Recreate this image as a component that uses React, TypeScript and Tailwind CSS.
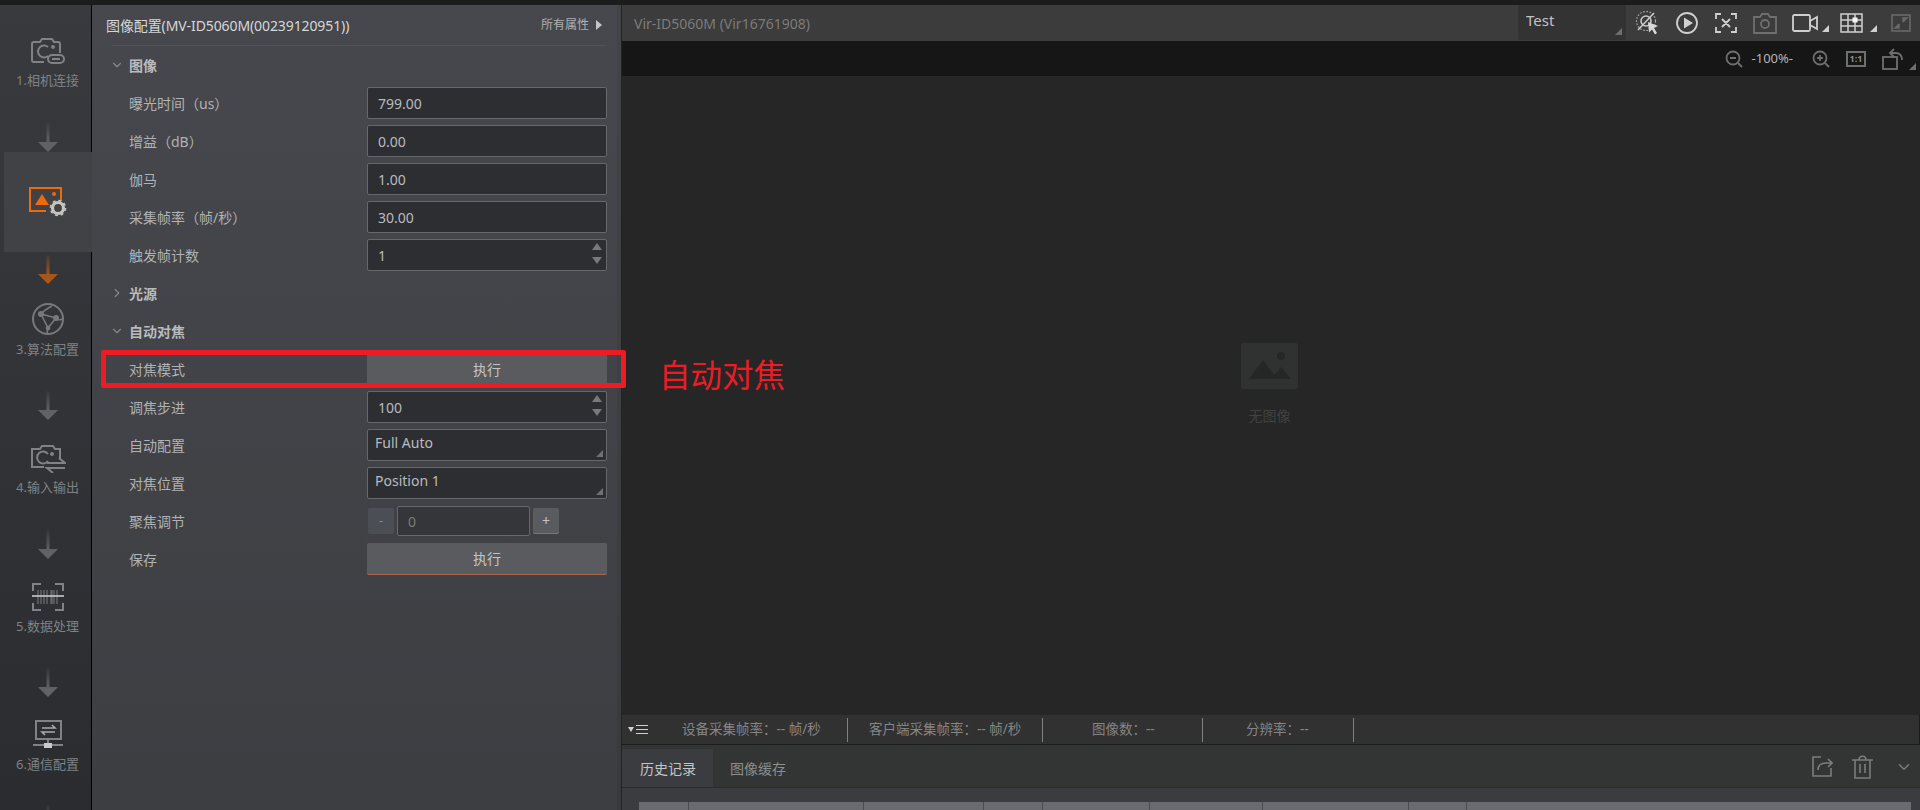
import React from 'react';
import { ChevronDown, ChevronRight } from 'lucide-react';

const FONT = 'font-["Noto_Sans","Noto_Sans_CJK_SC",sans-serif]';

const Arrow = ({ orange = false, id }: { orange?: boolean; id: string }) => {
  const color = orange ? '#a9561a' : '#606265';
  return (
    <svg width="20" height="29" viewBox="0 0 20 29" className="block shrink-0">
      <defs>
        <linearGradient id={id} x1="0" y1="0" x2="0" y2="1">
          <stop offset="0" stopColor={color} stopOpacity="0.1" />
          <stop offset="0.7" stopColor={color} />
        </linearGradient>
      </defs>
      <path d="M8.5 0h3v19H20L10 29 0 19h8.5z" fill={`url(#${id})`} />
    </svg>
  );
};

const StepLabel = ({ text, className }: { text: string; className: string }) => (
  <div className={`h-5 leading-5 text-[13px] whitespace-nowrap text-[#7f8285] ${className}`}>{text}</div>
);

const CameraLinkIcon = () => (
  <svg width="36" height="27" viewBox="0 0 36 27" fill="none" stroke="#808285" strokeWidth="2" className="block">
    <path d="M14 24H4a2 2 0 0 1-2-2V6a2 2 0 0 1 2-2h6l2-3h10l2 3h4a2 2 0 0 1 2 2v9" />
    <path d="M18 9a6 6 0 1 0 0 9" />
    <circle cx="23" cy="9" r="1" fill="#808285" />
    <rect x="18" y="17" width="16" height="8" rx="4" />
    <path d="M22 21h8" />
  </svg>
);

const ImageGearIcon = () => (
  <svg width="38" height="30" viewBox="0 0 38 30" fill="none" className="block">
    <path d="M17 24H1V1h31v13" stroke="#ee6a0b" strokeWidth="2" />
    <path d="M6 18l7-11 7 11z" fill="#ee6a0b" />
    <circle cx="25" cy="7" r="2" fill="#ee6a0b" />
    <circle cx="29" cy="21" r="5.5" stroke="#c9c5c0" strokeWidth="3.2" />
    <circle cx="29" cy="21" r="7.5" stroke="#c9c5c0" strokeWidth="1.6" strokeDasharray="3 2.9" />
  </svg>
);

const AlgoIcon = () => (
  <svg width="32" height="32" viewBox="0 0 32 32" fill="none" stroke="#77797c" strokeWidth="1.6" className="block">
    <circle cx="16" cy="16" r="15" strokeWidth="2" />
    <path d="M9 11l15 4-8 10zM9 11c3-4 7-6 11-8M24 15c2 3 4 2 6 1M16 25l-1 5" />
    <circle cx="9" cy="11" r="2.2" fill="#77797c" />
    <circle cx="24" cy="15" r="2.2" fill="#77797c" />
    <circle cx="16" cy="25" r="1.6" fill="#77797c" />
  </svg>
);

const CameraIoIcon = () => (
  <svg width="36" height="29" viewBox="0 0 36 29" fill="none" stroke="#808285" strokeWidth="2" className="block">
    <path d="M14 23H2V5h8l2-3h11l2 3h5v11" />
    <path d="M18 10a6 6 0 1 0 0 7" />
    <circle cx="22" cy="10" r="1" fill="#808285" />
    <path d="M17 19h18l-6-5M35 24H17l6 5" />
  </svg>
);

const ScanIcon = () => (
  <svg width="32" height="28" viewBox="0 0 32 28" fill="none" className="block">
    <path d="M9 1H1v7M23 1h8v7M9 27H1v-7M23 27h8v-7" stroke="#808285" strokeWidth="2" />
    <path d="M6 7v14M9 7v14M12 7v14M15 7v14M19 7v14M20 7v14M22 7v14M25 7v14" stroke="#65676a" strokeWidth="1.4" />
    <path d="M0 13h32" stroke="#c9cacb" strokeWidth="1.6" />
  </svg>
);

const NetIcon = () => (
  <svg width="30" height="28" viewBox="0 0 30 28" fill="none" className="block">
    <rect x="3" y="1" width="25" height="18" stroke="#808285" strokeWidth="2" />
    <path d="M9 8h13l-3-3M22 12H9l3 3" stroke="#a9abad" strokeWidth="1.6" />
    <path d="M15 19v4M0 25h30" stroke="#808285" strokeWidth="2" />
    <rect x="11" y="23" width="8" height="5" fill="#c9cacb" />
  </svg>
);

const Sidebar = () => (
  <aside className="w-[92px] shrink-0 shadow-[inset_-1px_0_0_#000] bg-gradient-to-b from-[#383a3e] to-[#2a2c2f] flex flex-col items-center overflow-hidden pl-[3px]">
    <div className="mt-[33px] h-[27px]"><CameraLinkIcon /></div>
    <StepLabel text="1.相机连接" className="mt-[5px]" />
    <div className="mt-[33px]"><Arrow id="a1" /></div>
    <div className="w-[88px] h-[100px] self-start ml-[1px] shrink-0 bg-[#404246] flex items-center justify-center">
      <ImageGearIcon />
    </div>
    <div className="mt-[3px]"><Arrow id="a2" orange /></div>
    <div className="mt-[19px]"><AlgoIcon /></div>
    <StepLabel text="3.算法配置" className="mt-[4px]" />
    <div className="mt-[32px]"><Arrow id="a3" /></div>
    <div className="mt-[24px]"><CameraIoIcon /></div>
    <StepLabel text="4.输入输出" className="mt-[4px]" />
    <div className="mt-[33px]"><Arrow id="a4" /></div>
    <div className="mt-[24px]"><ScanIcon /></div>
    <StepLabel text="5.数据处理" className="mt-[5px]" />
    <div className="mt-[32px]"><Arrow id="a5" /></div>
    <div className="mt-[23px]"><NetIcon /></div>
    <StepLabel text="6.通信配置" className="mt-[6px]" />
    <div className="mt-[31px]"><Arrow id="a6" /></div>
  </aside>
);

const Section = ({ title, open = true }: { title: string; open?: boolean }) => (
  <div className="h-[38px] flex items-center pl-[18px] font-bold text-[14px] text-[#b9bbbd]">
    {open ? <ChevronDown size={14} className="text-[#85878a] mr-[5px]" /> : <ChevronRight size={14} className="text-[#85878a] mr-[5px]" />}
    {title}
  </div>
);

const Row = ({ label, children }: { label: string; children: React.ReactNode }) => (
  <div className="h-[38px] flex items-center pl-[37px]">
    <div className="w-[238px] text-[14px] text-[#b0b2b4]">{label}</div>
    <div className="w-[240px] h-[32px]">{children}</div>
  </div>
);

const ValueInput = ({ value, spin = false }: { value: string; spin?: boolean }) => (
  <div className="relative h-full rounded-[2px] border border-[#66686c] bg-[#2d2e32] pl-[10px] flex items-center text-[14px] text-[#b9bbbd]">
    {value}
    {spin && (
      <div className="absolute right-[4px] top-[3px] flex flex-col gap-[7px]">
        <div className="w-0 h-0 border-x-[5px] border-x-transparent border-b-[7px] border-b-[#77797c]" />
        <div className="w-0 h-0 border-x-[5px] border-x-transparent border-t-[7px] border-t-[#77797c]" />
      </div>
    )}
  </div>
);

const SelectBox = ({ value }: { value: string }) => (
  <div className="relative h-full rounded-[2px] border border-[#66686c] bg-[#2d2e32] pl-[7px] pt-[3px] text-[14px] leading-5 text-[#b9bbbd]">
    {value}
    <div className="absolute right-[3px] bottom-[3px] w-0 h-0 border-l-[7px] border-l-transparent border-b-[7px] border-b-[#6e7073]" />
  </div>
);

const RunButton = ({ plain = false }: { plain?: boolean }) => (
  <div className={`h-full rounded-[2px] bg-[#5a5b5f] flex items-center justify-center text-[14px] text-[#c4c5c6] ${plain ? '' : 'border-b border-[#a8674a]'}`}>
    执行
  </div>
);

const ConfigPanel = () => (
  <section className="w-[530px] shrink-0 border-r border-[#232323] bg-gradient-to-b from-[#46484d] to-[#3d3e42] flex">
    <div className="flex-1">
      <div className="h-[41px] pl-[14px] pr-[11px] flex flex-col">
        <div className="h-[40px] flex items-center justify-between text-[14px]">
          <span className="tracking-[-0.1px] text-[#d6d7d8]">图像配置(MV-ID5060M(00239120951))</span>
          <span className="mr-[4px] flex items-center gap-[7px] text-[12px] text-[#aeb0b2]">
            所有属性
            <span className="w-0 h-0 border-y-[5px] border-y-transparent border-l-[6px] border-l-[#c4c5c6]" />
          </span>
        </div>
        <div className="ml-[6px] h-px shrink-0 bg-[#505256]" />
      </div>
      <Section title="图像" />
      <Row label="曝光时间（us）"><ValueInput value="799.00" /></Row>
      <Row label="增益（dB）"><ValueInput value="0.00" /></Row>
      <Row label="伽马"><ValueInput value="1.00" /></Row>
      <Row label="采集帧率（帧/秒）"><ValueInput value="30.00" /></Row>
      <Row label="触发帧计数"><ValueInput value="1" spin /></Row>
      <Section title="光源" open={false} />
      <Section title="自动对焦" />
      <Row label="对焦模式"><RunButton plain /></Row>
      <Row label="调焦步进"><ValueInput value="100" spin /></Row>
      <Row label="自动配置"><SelectBox value="Full Auto" /></Row>
      <Row label="对焦位置"><SelectBox value="Position 1" /></Row>
      <Row label="聚焦调节">
        <div className="h-full flex items-center gap-[3px] pl-px">
          <div className="w-[26px] h-[26px] rounded-[2px] bg-[#4b4e55] flex items-center justify-center text-[13px] text-[#85878a]">-</div>
          <div className="w-[133px] h-[30px] rounded-[2px] border border-[#66686c] bg-[#35363a] pl-[10px] flex items-center text-[14px] text-[#7a7c7e]">0</div>
          <div className="w-[26px] h-[26px] rounded-[2px] bg-[#5a5b5f] border-b border-[#a8674a] flex items-center justify-center text-[14px] text-[#c4c5c6]">+</div>
        </div>
      </Row>
      <Row label="保存"><RunButton /></Row>
    </div>
    <div className="w-[4px] shrink-0 bg-black/5" />
  </section>
);

const Corner = () => (
  <div className="w-0 h-0 border-l-[7px] border-l-transparent border-b-[7px] border-b-[#d0d0d0]" />
);

const CursorOffIcon = () => (
  <svg width="24" height="24" viewBox="0 0 24 24" fill="none" className="block">
    <circle cx="11" cy="10" r="9.5" stroke="#a9a9a9" strokeWidth="1.2" strokeDasharray="1.6 1.6" />
    <circle cx="11" cy="10" r="5" stroke="#c8c8c8" strokeWidth="1.6" />
    <path d="M3 19L19 2" stroke="#c8c8c8" strokeWidth="1.6" />
    <path d="M13 11l10 4-4 2 3 5-2 1.500-3-5-3 3z" fill="#d8d8d8" />
  </svg>
);

const PlayIcon = () => (
  <svg width="22" height="22" viewBox="0 0 22 22" fill="none" className="block">
    <circle cx="11" cy="11" r="10" stroke="#d0d0d0" strokeWidth="1.8" />
    <path d="M8 5.500l9 5.500-9 5.500z" fill="#d0d0d0" />
  </svg>
);

const FocusIcon = () => (
  <svg width="22" height="20" viewBox="0 0 22 20" fill="none" stroke="#d0d0d0" strokeWidth="1.8" className="block">
    <path d="M6 1H1v5M16 1h5v5M6 19H1v-5M16 19h5v-5M7 6l8 8M15 6l-8 8" />
  </svg>
);

const CameraIcon = () => (
  <svg width="24" height="21" viewBox="0 0 24 21" fill="none" stroke="#6f6f6f" strokeWidth="1.8" className="block">
    <path d="M1 4h6l2-3h6l2 3h6v16H1z" />
    <circle cx="12" cy="11" r="4" />
  </svg>
);

const VideoIcon = () => (
  <svg width="26" height="18" viewBox="0 0 26 18" fill="none" stroke="#d0d0d0" strokeWidth="1.8" className="block">
    <rect x="1" y="1" width="17" height="16" rx="1.500" />
    <path d="M25 3l-7 4v4l7 4z" />
  </svg>
);

const GridIcon = () => (
  <svg width="23" height="20" viewBox="0 0 23 20" fill="none" stroke="#d0d0d0" strokeWidth="1.5" className="block">
    <rect x="1" y="1" width="21" height="18" />
    <path d="M1 7h21M1 13h21M8 1v18M15 1v18" />
    <rect x="12.500" y="4.500" width="5" height="5" fill="#f4f4f4" stroke="none" />
  </svg>
);

const ExpandIcon = () => (
  <svg width="20" height="18" viewBox="0 0 20 18" fill="none" className="block">
    <rect x="1" y="1" width="18" height="16" stroke="#6a6a6a" strokeWidth="1.6" />
    <path d="M4 14l4-4M12 8l4-4M4 14h4v-3zM16 4h-4v3z" stroke="#6a6a6a" strokeWidth="1.4" fill="#6a6a6a" />
  </svg>
);

const ZoomIcon = ({ plus = false }: { plus?: boolean }) => (
  <svg width="18" height="18" viewBox="0 0 18 18" fill="none" stroke="#6f6f6f" strokeWidth="1.8" className="block">
    <circle cx="8" cy="8" r="6.500" />
    <path d="M13 13l4 4M5 8h6" />
    {plus && <path d="M8 5v6" />}
  </svg>
);

const RotateIcon = () => (
  <svg width="22" height="22" viewBox="0 0 22 22" fill="none" stroke="#6f6f6f" strokeWidth="1.8" className="block">
    <rect x="1" y="9" width="14" height="12" />
    <path d="M9 5h5a6 6 0 0 1 6 6v1M12 1L8 5l4 4" />
  </svg>
);

const ShareIcon = () => (
  <svg width="21" height="21" viewBox="0 0 21 21" fill="none" stroke="#7b7d7d" strokeWidth="1.6" className="block">
    <path d="M9 1H1v19h18v-8" />
    <path d="M6 14c0-5 3-7 8-7h6M16 3l4 4-4 4" />
  </svg>
);

const TrashIcon = () => (
  <svg width="21" height="24" viewBox="0 0 21 24" fill="none" stroke="#7b7d7d" strokeWidth="1.6" className="block">
    <path d="M0 5h21M7 5c0-5 7-5 7 0M3 5v18h15V5M8 9v9M13 9v9" />
  </svg>
);

const ToolBar = () => (
  <div className="h-[36px] bg-[#3c3c3c] flex items-center">
    <span className="pl-[12px] text-[14px] text-[#7b7b7b]">Vir-ID5060M (Vir16761908)</span>
    <div className="ml-auto h-full flex items-center">
      <div className="relative w-[108px] h-[35px] self-start bg-[#333333] rounded-[2px] pl-[8px] pt-[5px] text-[15px] leading-5 text-[#c2c2c2]">
        Test
        <div className="absolute right-[4px] bottom-[5px] w-0 h-0 border-l-[7px] border-l-transparent border-b-[7px] border-b-[#6e6e6e]" />
      </div>
      <div className="ml-[9px]"><CursorOffIcon /></div>
      <div className="ml-[17px]"><PlayIcon /></div>
      <div className="ml-[17px]"><FocusIcon /></div>
      <div className="ml-[16px]"><CameraIcon /></div>
      <div className="ml-[15px]"><VideoIcon /></div>
      <div className="self-end mb-[9px] ml-[4px]"><Corner /></div>
      <div className="ml-[11px]"><GridIcon /></div>
      <div className="self-end mb-[9px] ml-[7px]"><Corner /></div>
      <div className="ml-[14px] mr-[9px]"><ExpandIcon /></div>
    </div>
  </div>
);

const ZoomBar = () => (
  <div className="h-[35px] bg-[#161616] flex items-center justify-end pr-[4px]">
    <ZoomIcon />
    <span className="ml-[9px] text-[13px] text-[#b5b5b5]">-100%-</span>
    <div className="ml-[19px]"><ZoomIcon plus /></div>
    <div className="ml-[16px] w-[20px] h-[16px] border-2 border-[#6f6f6f] flex items-center justify-center text-[9px] font-bold leading-none text-[#8a8a8a]">1:1</div>
    <div className="ml-[16px]"><RotateIcon /></div>
    <div className="self-end mb-[6px] ml-[5px] w-0 h-0 border-l-[7px] border-l-transparent border-b-[7px] border-b-[#6e6e6e]" />
  </div>
);

const Canvas = () => (
  <div className="flex-1 bg-[#262626] flex flex-col items-center pt-[267px] pr-[3px]">
    <svg width="57" height="46" viewBox="0 0 57 46" className="block">
      <rect width="57" height="46" rx="2" fill="#303231" />
      <circle cx="40" cy="13" r="4" fill="#262626" />
      <path d="M8 36l14-19 11 15 7-8 10 12z" fill="#262626" />
    </svg>
    <div className="mt-[17px] text-[14px] leading-5 text-[#414141]">无图像</div>
  </div>
);

const stats = [
  { text: '设备采集帧率：-- 帧/秒', width: 'w-[226px]', pad: 'pl-[60px]' },
  { text: '客户端采集帧率：-- 帧/秒', width: 'w-[195px]', pad: 'pl-[21px]' },
  { text: '图像数：--', width: 'w-[160px]', pad: 'pl-[49px]' },
  { text: '分辨率：--', width: 'w-[151px]', pad: 'pl-[43px]' },
];

const StatusBar = () => (
  <div className="relative h-[30px] bg-[#313131] border-b border-r border-[#1c1c1c] flex items-center">
    {stats.map(s => (
      <div key={s.text} className={`${s.width} ${s.pad} h-[24px] shrink-0 border-r border-[#808080] flex items-center text-[13.5px] whitespace-nowrap text-[#858585]`}>
        {s.text}
      </div>
    ))}
    <div className="absolute left-[6px] top-[10px] flex items-center gap-[2px]">
      <div className="w-0 h-0 border-x-[3px] border-x-transparent border-t-[5px] border-t-[#d0d0d0]" />
      <div className="w-[12px] h-[9px] border-y border-[#d0d0d0] flex items-center"><div className="w-full h-px bg-[#d0d0d0]" /></div>
    </div>
  </div>
);

const columns = ['w-[50px]', 'w-[175px]', 'w-[120px]', 'w-[59px]', 'w-[107px]', 'w-[113px]', 'w-[146px]', 'w-[58px]', 'flex-1'];

const History = () => (
  <div className="h-[65px] bg-[#3b3c40] flex flex-col">
    <div className="h-[43px] shrink-0 bg-[#333534] border-b border-[#2a2b2b] flex items-end">
      <div className="w-[91px] h-[38px] bg-[#3b3c40] flex items-center pl-[18px] text-[14px] text-[#c4c5c5]">历史记录</div>
      <div className="ml-[17px] h-[38px] flex items-center text-[14px] text-[#8c8e8e]">图像缓存</div>
      <div className="ml-auto self-center flex items-center pr-[7px] pt-[1px]">
        <ShareIcon />
        <div className="ml-[19px]"><TrashIcon /></div>
        <ChevronDown size={18} className="ml-[22px] text-[#7b7d7d]" />
      </div>
    </div>
    <div className="mt-[14px] ml-[17px] mr-[9px] flex h-[8px]">
      {columns.map((c, i) => (
        <div key={i} className={`${c} bg-[#6a6b70] border-r border-[#4b4c50] last:border-r-0`} />
      ))}
    </div>
  </div>
);

export default function App() {
  return (
    <div className={`relative w-[1920px] h-[810px] overflow-hidden bg-[#1c1c1c] flex flex-col ${FONT}`}>
      <div className="h-[5px] shrink-0 bg-[#1c1c1c]" />
      <div className="flex-1 min-h-0 flex">
        <Sidebar />
        <ConfigPanel />
        <main className="flex-1 min-w-0 flex flex-col">
          <ToolBar />
          <ZoomBar />
          <Canvas />
          <StatusBar />
          <History />
        </main>
      </div>
      {/* red callout drawn over the screenshot */}
      <div className="absolute left-[101px] top-[350px] w-[525px] h-[38px] rounded-[2px] border-[5px] border-[#ed1c24]" />
      <div className="absolute left-[659px] top-[352px] text-[31.5px] leading-[46px] text-[#ed1c24]">自动对焦</div>
    </div>
  );
}
